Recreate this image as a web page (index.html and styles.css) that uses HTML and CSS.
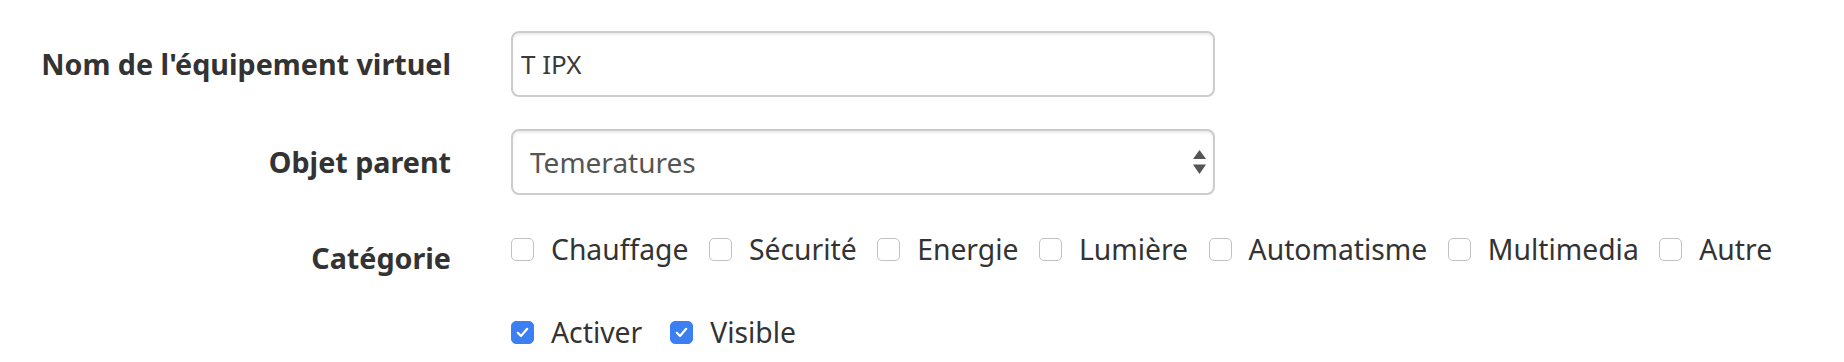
FILE: index.html
```html
<!DOCTYPE html>
<html lang="fr">
<head>
<meta charset="utf-8">
<title>Équipement virtuel</title>
<link rel="stylesheet" href="styles.css">
</head>
<body>
<form class="form">
  <div class="row">
    <label class="label">Nom de l'équipement virtuel</label>
    <input class="input" type="text" value="T IPX">
  </div>
  <div class="row">
    <label class="label">Objet parent</label>
    <div class="select-wrap">
      <select class="select">
        <option>Temeratures</option>
      </select>
      <svg class="select-arrows" width="13" height="24" viewBox="0 0 13 24"><polygon points="6.5,0 13,9 0,9" fill="#555"/><polygon points="0,14.5 13,14.5 6.5,24" fill="#555"/></svg>
    </div>
  </div>
  <div class="row row-cat">
    <label class="label">Catégorie</label>
    <div class="checks">
      <span class="check"><span class="box"></span>Chauffage</span>
      <span class="check"><span class="box"></span>Sécurité</span>
      <span class="check"><span class="box"></span>Energie</span>
      <span class="check"><span class="box"></span>Lumière</span>
      <span class="check"><span class="box"></span>Automatisme</span>
      <span class="check"><span class="box"></span>Multimedia</span>
      <span class="check"><span class="box"></span>Autre</span>
    </div>
  </div>
  <div class="row row-flags">
    <span></span>
    <div class="checks">
      <span class="check"><span class="box checked"><svg width="13" height="11" viewBox="0 0 13 11"><path d="M1.8 5.8 L5 9 L11.2 1.8" fill="none" stroke="#fff" stroke-width="2.2" stroke-linecap="round" stroke-linejoin="round"/></svg></span>Activer</span>
      <span class="check"><span class="box checked"><svg width="13" height="11" viewBox="0 0 13 11"><path d="M1.8 5.8 L5 9 L11.2 1.8" fill="none" stroke="#fff" stroke-width="2.2" stroke-linecap="round" stroke-linejoin="round"/></svg></span>Visible</span>
    </div>
  </div>
</form>
</body>
</html>
```
FILE: styles.css
```css
body {
  margin: 0;
  background: #fff;
  color: #333;
  font-family: "Noto Sans", "Open Sans", sans-serif;
}

.form {
  padding-top: 31px;
}

.row {
  display: grid;
  grid-template-columns: 451px 704px;
  column-gap: 60px;
  align-items: start;
  margin-bottom: 32px;
}

.label {
  text-align: right;
  font-weight: 700;
  font-size: 28.7px;
  line-height: 40px;
  padding-top: 13px;
  color: #333;
}

.input {
  box-sizing: border-box;
  width: 100%;
  height: 66px;
  margin: 0;
  border: 2px solid #ccc;
  border-radius: 8px;
  padding: 0 8px;
  font-family: "Noto Sans", sans-serif;
  font-size: 26px;
  color: #3a3a3a;
  background: #fff;
  box-shadow: inset 0 2px 2px rgba(0, 0, 0, 0.075);
  outline: none;
}

.select-wrap {
  position: relative;
  height: 66px;
}

.select {
  box-sizing: border-box;
  width: 100%;
  height: 66px;
  margin: 0;
  border: 2px solid #ccc;
  border-radius: 8px;
  padding: 0 17px;
  font-family: "Noto Sans", sans-serif;
  font-size: 28px;
  color: #555;
  background: #fff;
  box-shadow: inset 0 2px 2px rgba(0, 0, 0, 0.075);
  appearance: none;
  -webkit-appearance: none;
  outline: none;
}

.select-arrows {
  position: absolute;
  right: 9px;
  top: 21px;
}

.row-cat {
  margin-top: -2px;
  margin-bottom: 34px;
}

.row-cat .checks {
  padding-top: 4px;
}

.row-flags {
  margin-bottom: 0;
}

.checks {
  display: flex;
  align-items: center;
  white-space: nowrap;
  font-size: 28.3px;
  line-height: 40px;
  color: #333;
}

.check {
  display: inline-flex;
  align-items: center;
  gap: 17px;
  margin-right: 20.5px;
}

.row-flags .check {
  margin-right: 28px;
}

.box {
  box-sizing: border-box;
  width: 23px;
  height: 23px;
  border: 1.6px solid #c2c2c2;
  border-radius: 5px;
  background: #fff;
  display: inline-flex;
  align-items: center;
  justify-content: center;
}

.box.checked {
  border-color: #3b7ff2;
  background: #3b7ff2;
}
```
